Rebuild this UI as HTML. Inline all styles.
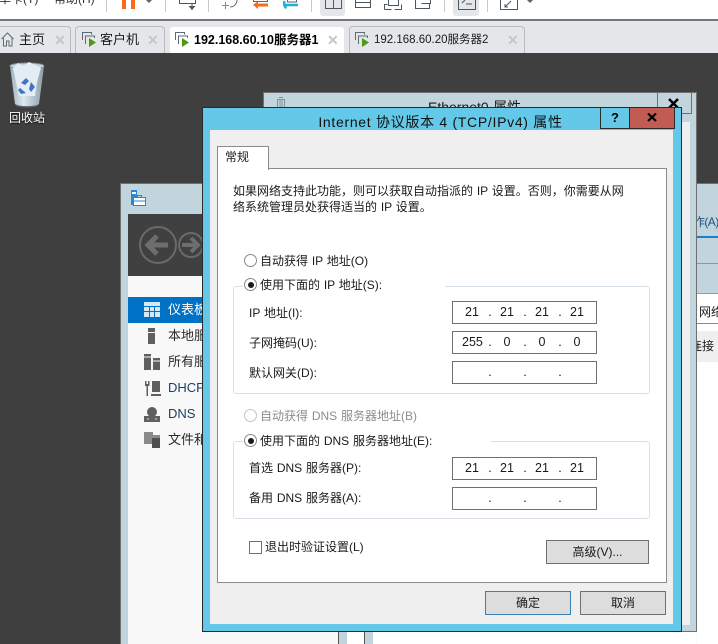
<!DOCTYPE html>
<html lang="zh"><head><meta charset="utf-8"><title>Internet 协议版本 4 属性</title>
<style>
html,body{margin:0;padding:0}
body{width:718px;height:644px;overflow:hidden;position:relative;background:#fff;font:12px/16px "Liberation Sans","Noto Sans CJK SC",sans-serif;color:#1a1a1a}
div,span,svg{position:absolute;box-sizing:border-box}
.t{white-space:nowrap;word-spacing:.5px}
.c{text-align:center}
.inp{left:452px;width:145px;height:23px;background:#fff;border:1px solid #707070}
.d{width:20px;text-align:center;white-space:nowrap;font-size:12.5px}
.r{width:13px;height:13px;border:1px solid #8a8a8a;border-radius:50%;background:#fff;left:244px}
.r i{position:absolute;left:2.5px;top:2.5px;width:6px;height:6px;border-radius:50%;background:#1a1a1a}
.btn{background:#dddddd;border:1px solid #707070;text-align:center;line-height:22px}
.grp{left:233px;width:417px;border:1px solid #d9e2ea;border-radius:3px}
.tab{top:26px;height:28px;background:#e4e6e9;border:1px solid #b8babd;border-bottom:0;border-radius:4px 4px 0 0}
.x{color:#c4c6c9;font:bold 14px/16px "Liberation Sans",sans-serif;top:32px}
.nav{left:168px;color:#2a2a2a;font-size:13px;white-space:nowrap;width:35px;overflow:hidden}
.clip{left:697px;width:21px;height:16px;overflow:hidden}
.clip span{white-space:nowrap;top:0}
</style></head><body>

<!-- toolbar -->
<div style="left:0;top:0;width:718px;height:21px;background:#fff;border-bottom:2px solid #747678"></div>
<div class="t" style="left:-13px;top:-9px;font-size:12px;color:#333">菜单卡(T)</div>
<div class="t" style="left:54px;top:-9px;font-size:12px;color:#333">帮助(H)</div>
<div style="left:320px;top:-4px;width:25px;height:20px;background:#e4e6e9;border-radius:3px"></div>
<div style="left:453px;top:-4px;width:26px;height:20px;background:#e4e6e9;border-radius:3px"></div>
<svg style="left:0;top:0" width="718" height="20" fill="none">
<g stroke="#c8c8c8"><path d="M106.500 0V12M165.500 0V12M208.500 0V12M311.500 0V12M444.500 0V12M487.500 0V12"/></g>
<path d="M122 0h4v9h-4zM131 0h4v9h-4z" fill="#fb6a1c"/>
<path d="M146 0h6l-3 3z" fill="#5a6670"/>
<path d="M179.500 0v3.500h16V0M192 4v6" stroke="#4a5660"/><path d="M188.500 6h7l-3.500 4z" fill="#4a5660"/>
<path d="M237 0a7 7 0 0 1-7 7" stroke="#5a6670"/><path d="M222 5.500h7M225.500 2v7" stroke="#f06a25"/>
<path d="M256 5h12" stroke="#fb6a1c" stroke-width="3"/><path d="M258 1l-5 4 5 4z" fill="#fb6a1c"/><path d="M253.500 0v1.500h14V0" stroke="#5a6670"/>
<path d="M285 5h13M284.500 1c-1 3 0 6 2 7" stroke="#18b4d8" stroke-width="2.500"/><path d="M287.500 0v2h9V0" stroke="#5a6670"/>
<path d="M325.500 0v8.500h16V0M333.500 0v8" stroke="#4a5660"/>
<path d="M355.500 0v7.500h15V0M355.500 2.500h15" stroke="#4a5660"/>
<path d="M384.500 9.500V4.500h3M384.500 9.500h7M401.500 4.500v5h-7M388.500 0v5.500h10V0" stroke="#4a5660"/>
<path d="M415.500 0v8.500h14V3.500M421.500 3.500h9V0" stroke="#4a5660"/>
<path d="M458.500 0v9.500h17V0M462 3l3-3M466 4h6" stroke="#4a5660"/>
<path d="M500.500 0v9.500h17V0M505 7l6-6M505 4v3h3" stroke="#4a5660"/>
<path d="M527 0h6l-3 3z" fill="#5a6670"/>
</svg>

<!-- tab bar -->
<div style="left:0;top:21px;width:718px;height:32px;background:#e4e6e9"></div>
<div class="tab" style="left:-6px;width:77px"></div>
<div class="tab" style="left:75px;width:90px"></div>
<div class="tab" style="left:169px;width:176px;background:#fff;border-color:#e4e6e9"></div>
<div class="tab" style="left:349px;width:176px"></div>
<svg style="left:0;top:26px" width="530" height="26" fill="none">
<path d="M1.500 13L7.500 7l6 6M3.500 12v8h3v-5h2.500v5h3v-8" stroke="#5d6b78"/>
<path d="M82.500 14V6.500h9v2M85.500 18v-8h9v2" stroke="#5d6b78"/><path d="M89 12v9l7-4.500z" fill="#4f9a12"/>
<g transform="translate(93,0)"><path d="M82.500 14V6.500h9v2M85.500 18v-8h9v2" stroke="#5d6b78"/><path d="M89 12v9l7-4.500z" fill="#4f9a12"/></g>
<g transform="translate(273,0)"><path d="M82.500 14V6.500h9v2M85.500 18v-8h9v2" stroke="#5d6b78"/><path d="M89 12v9l7-4.500z" fill="#4f9a12"/></g>
</svg>
<div class="t" style="left:19px;top:32px;font-size:13px">主页</div>
<div class="t" style="left:100px;top:32px;font-size:13px">客户机</div>
<div class="t" style="left:194px;top:32px;font-weight:bold;color:#000;font-size:12.5px">192.168.60.10服务器1</div>
<div class="t" style="left:374px;top:32px;font-size:11.5px">192.168.60.20服务器2</div>
<div class="x" style="left:54px">✕</div><div class="x" style="left:147px">✕</div><div class="x" style="left:327px">✕</div><div class="x" style="left:507px">✕</div>

<!-- desktop -->
<div style="left:0;top:53px;width:718px;height:591px;background:#3f3f3f"></div>
<svg style="left:8px;top:60px" width="40" height="48">
<defs><linearGradient id="b" x1="0" x2="1"><stop offset="0" stop-color="#9cb0bc"/><stop offset=".4" stop-color="#dfe9ef"/><stop offset="1" stop-color="#8a9ca8"/></linearGradient></defs>
<path d="M2 6l5 38c4 3 20 3 24 0l5-38z" fill="url(#b)"/>
<ellipse cx="19" cy="6" rx="17" ry="3" fill="#c8d4da" stroke="#8a979f"/>
<path d="M5 8l5-5 5 3 6-4 6 3 6 3-4 14-2 14H11L8 22z" fill="#e4edf3"/>
<path d="M13 23l5-5 3 3-4 4zM23 22l4 5-4 5-2-3zM12 28l6 5-5 1-3-4z" fill="#3d74c8"/>
<path d="M7 44c4 3 20 3 24 0l-1 2c-4 2-18 2-22 0z" fill="#59666e"/>
</svg>
<div class="t" style="left:9px;top:110px;color:#fff;text-shadow:0 1px 1px #000">回收站</div>

<!-- server manager -->
<div style="left:120px;top:183px;width:598px;height:461px;background:#c3d5dc;border-left:1px solid #707070;border-top:1px solid #707070"></div>
<div style="left:128px;top:276px;width:590px;height:368px;background:#f8f8f8"></div>
<div style="left:128px;top:214px;width:590px;height:62px;background:#404040"></div>
<svg style="left:128px;top:186px" width="80" height="80" fill="none">
<rect x="3" y="4" width="6" height="15" fill="#2a86d8"/><rect x="4" y="6" width="4" height="2" fill="#fff"/>
<rect x="5.500" y="11.500" width="12" height="8" fill="#fff" stroke="#2a86d8"/><path d="M9.500 11V9.500h4V11M6 15h11" stroke="#2a86d8"/>
<circle cx="30" cy="59" r="18" stroke="#6a6a6a" stroke-width="2"/><path d="M20 59h20M29 50l-9 9 9 9" stroke="#6d6d6d" stroke-width="5"/>
<circle cx="63" cy="59" r="12" stroke="#6a6a6a" stroke-width="2"/><path d="M54 59h16M63 52l7 7-7 7" stroke="#6d6d6d" stroke-width="4"/>
</svg>
<div style="left:128px;top:297px;width:80px;height:26px;background:#0072c6"></div>
<svg style="left:140px;top:298px" width="26" height="156">
<path d="M4 4h16v4H4zM4 9h5v4H4zM10 9h4v4h-4zM15 9h5v4h-5zM4 14h5v5H4zM10 14h4v5h-4zM15 14h5v5h-5z" fill="#d5e8f6"/>
<path d="M8 30h7v4H8zM8 35h7v11H8z" fill="#5f5f5f"/>
<path d="M4 56h7v16H4zM13 60h7v12h-7z" fill="#5f5f5f"/><path d="M4 59h7M13 63h7" stroke="#f8f8f8"/>
<path d="M12 83h8v11h-8zM11 96h10v2H11zM5 83h1.500v3h1.500v-3h1.500v5H8v10H6.500V88H5z" fill="#5f5f5f"/>
<circle cx="12" cy="114" r="5" fill="#5f5f5f"/><path d="M4 118h16v6H4z" fill="#5f5f5f"/><path d="M7 121h2M15 121h2" stroke="#ddd"/>
<path d="M4 134h9v3h7v9H4z" fill="#8a8a8a"/><path d="M12 140h8v10h-8z" fill="#4f4f4f"/>
</svg>
<div class="nav" style="top:302px;color:#fff">仪表板</div>
<div class="nav" style="top:328px">本地服务器</div>
<div class="nav" style="top:354px">所有服务器</div>
<div class="nav" style="top:380px;color:#1f3f66">DHCP</div>
<div class="nav" style="top:406px;color:#1f3f66">DNS</div>
<div class="nav" style="top:432px">文件和存储</div>

<!-- right strip -->
<div style="left:697px;top:184px;width:21px;height:460px;background:#c3d5dc"></div>
<div class="clip" style="top:214px;color:#1f4f80"><span style="left:-4px;letter-spacing:-.6px">作(A)</span></div>
<div style="left:697px;top:236px;width:21px;height:2px;background:#1a80c8"></div>
<div style="left:697px;top:263px;width:21px;height:1px;background:#8a9aa2"></div>
<div style="left:697px;top:293px;width:21px;height:351px;background:#fff;border-top:1px solid #9a9a9a"></div>
<div style="left:697px;top:323px;width:21px;height:1px;background:#8a8a8a"></div>
<div class="t" style="left:699px;top:304px;width:19px;overflow:hidden">网络</div>
<div style="left:697px;top:331px;width:21px;height:31px;background:#efefef"></div>
<div class="clip" style="top:338px"><span style="left:-7px">连接</span></div>

<!-- lower stripes -->
<div style="left:338px;top:625px;width:9px;height:19px;background:#c3d5dc;border-left:1px solid #555"></div>
<div style="left:347px;top:625px;width:17px;height:19px;background:#fff"></div>
<div style="left:364px;top:625px;width:9px;height:19px;background:#c3d5dc;border-left:1px solid #555"></div>
<div style="left:373px;top:625px;width:323px;height:19px;background:#fff"></div>

<!-- Ethernet0 window -->
<div style="left:263px;top:92px;width:434px;height:540px;background:#c3d5dc;border:1px solid #707070"></div>
<div style="left:675px;top:122px;width:15px;height:503px;background:#efefef"></div>
<svg style="left:275px;top:97px" width="12" height="12" fill="none"><path d="M2.500 2.500h7v9h-7zM5 2.500v9M7 2.500v9M4 .5h4" stroke="#7f939c"/></svg>
<div class="t" style="left:428px;top:99px;font-size:14px">Ethernet0 属性</div>
<div style="left:657px;top:92px;width:35px;height:22px;border:1px solid #707070;border-top:0"></div>
<svg style="left:667px;top:98px" width="14" height="12" fill="none"><path d="M2 1l9 9M11 1l-9 9" stroke="#000" stroke-width="2.500"/></svg>

<!-- dialog -->
<div style="left:202px;top:107px;width:480px;height:525px;background:#64c8e8;border:1px solid #2a2a2a"></div>
<div style="left:210px;top:130px;width:463px;height:494px;background:#efefef"></div>
<div class="t c" style="left:203px;top:114px;width:475px;font-size:14px;letter-spacing:.7px;word-spacing:0;color:#111">Internet 协议版本 4 (TCP/IPv4) 属性</div>
<div style="left:600px;top:107px;width:30px;height:22px;border:1px solid #2a2a2a;background:#64c8e8"></div>
<div style="left:629px;top:107px;width:46px;height:22px;border:1px solid #2a2a2a;background:#c25b52"></div>
<div class="t c" style="left:601px;top:110px;width:28px;font:bold 13px/16px 'Liberation Sans',sans-serif;color:#000">?</div>
<svg style="left:646px;top:112px" width="13" height="11" fill="none"><path d="M2 1.500l8 7.500M10 1.500L2 9" stroke="#000" stroke-width="2.200"/></svg>

<div style="left:217px;top:168px;width:450px;height:415px;background:#fff;border:1px solid #8a8a8f"></div>
<div style="left:217px;top:146px;width:52px;height:24px;background:#fff;border:1px solid #8a8a8f;border-bottom:0"></div>
<div class="t" style="left:225px;top:149px">常规</div>

<div class="t" style="left:233px;top:183px">如果网络支持此功能，则可以获取自动指派的 IP 设置。否则，你需要从网</div>
<div class="t" style="left:233px;top:199px">络系统管理员处获得适当的 IP 设置。</div>

<div class="r" style="top:254px"></div>
<div class="t" style="left:260px;top:253px">自动获得 IP 地址(O)</div>

<div class="grp" style="top:286px;height:108px"></div>
<div style="left:243px;top:280px;width:202px;height:12px;background:#fff"></div>
<div class="r" style="top:278px"><i></i></div>
<div class="t" style="left:260px;top:277px">使用下面的 IP 地址(S):</div>
<div class="t" style="left:249px;top:305px">IP 地址(I):</div>
<div class="t" style="left:249px;top:335px">子网掩码(U):</div>
<div class="t" style="left:249px;top:365px">默认网关(D):</div>
<div class="inp" style="top:301px"></div><div class="inp" style="top:331px"></div><div class="inp" style="top:361px"></div>
<span class="d" style="left:462px;top:304px">21</span><span class="d" style="left:480px;top:304px">.</span><span class="d" style="left:497px;top:304px">21</span><span class="d" style="left:515px;top:304px">.</span><span class="d" style="left:532px;top:304px">21</span><span class="d" style="left:550px;top:304px">.</span><span class="d" style="left:567px;top:304px">21</span>
<span class="d" style="left:462px;top:334px">255</span><span class="d" style="left:480px;top:334px">.</span><span class="d" style="left:497px;top:334px">0</span><span class="d" style="left:515px;top:334px">.</span><span class="d" style="left:532px;top:334px">0</span><span class="d" style="left:550px;top:334px">.</span><span class="d" style="left:567px;top:334px">0</span>
<span class="d" style="left:480px;top:364px">.</span><span class="d" style="left:515px;top:364px">.</span><span class="d" style="left:550px;top:364px">.</span>

<div class="r" style="top:409px;border-color:#c4c4c4"></div>
<div class="t" style="left:260px;top:408px;color:#8c8c8c">自动获得 DNS 服务器地址(B)</div>

<div class="grp" style="top:441px;height:78px"></div>
<div style="left:243px;top:435px;width:248px;height:12px;background:#fff"></div>
<div class="r" style="top:434px"><i></i></div>
<div class="t" style="left:260px;top:433px">使用下面的 DNS 服务器地址(E):</div>
<div class="t" style="left:249px;top:460px">首选 DNS 服务器(P):</div>
<div class="t" style="left:249px;top:490px">备用 DNS 服务器(A):</div>
<div class="inp" style="top:457px"></div><div class="inp" style="top:487px"></div>
<span class="d" style="left:462px;top:460px">21</span><span class="d" style="left:480px;top:460px">.</span><span class="d" style="left:497px;top:460px">21</span><span class="d" style="left:515px;top:460px">.</span><span class="d" style="left:532px;top:460px">21</span><span class="d" style="left:550px;top:460px">.</span><span class="d" style="left:567px;top:460px">21</span>
<span class="d" style="left:480px;top:490px">.</span><span class="d" style="left:515px;top:490px">.</span><span class="d" style="left:550px;top:490px">.</span>

<div style="left:249px;top:541px;width:13px;height:13px;background:#fff;border:1px solid #707070"></div>
<div class="t" style="left:265px;top:539px">退出时验证设置(L)</div>
<div class="btn" style="left:546px;top:540px;width:103px;height:24px">高级(V)...</div>
<div class="btn" style="left:485px;top:591px;width:86px;height:24px;border-color:#3c7fb1">确定</div>
<div class="btn" style="left:580px;top:591px;width:86px;height:24px">取消</div>
</body></html>
